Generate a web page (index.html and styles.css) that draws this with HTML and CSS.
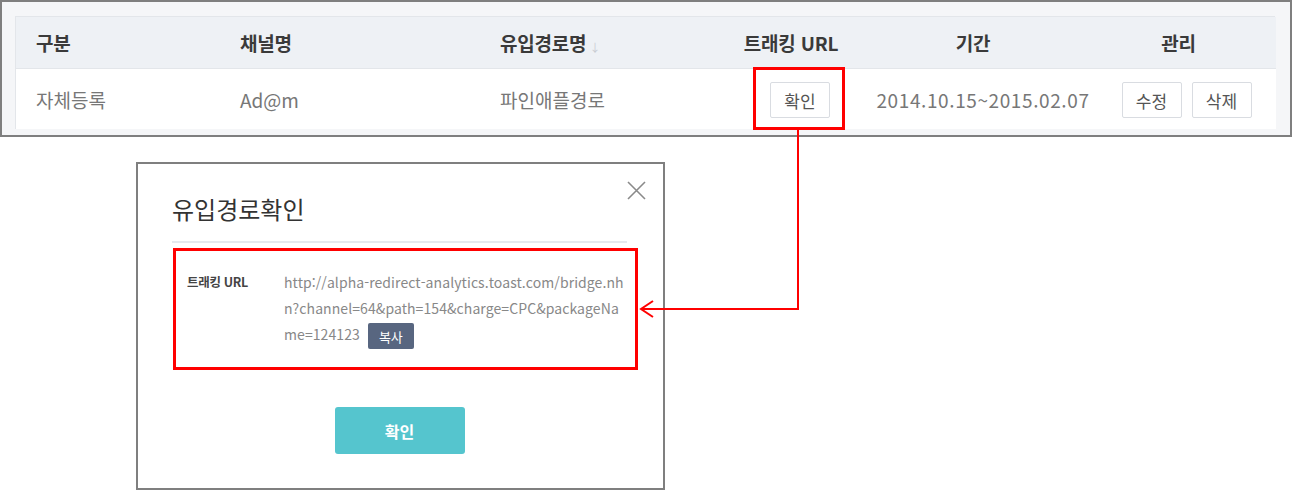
FILE: index.html
```html
<!DOCTYPE html>
<html lang="ko">
<head>
<meta charset="utf-8">
<link rel="stylesheet" href="styles.css">
</head>
<body>
<div class="page">
  <div class="frame">
    <div class="grid">
      <div class="th c1">구분</div>
      <div class="th c2">채널명</div>
      <div class="th c3">유입경로명<span class="sort">↓</span></div>
      <div class="th c4">트래킹 URL</div>
      <div class="th c5">기간</div>
      <div class="th c6">관리</div>

      <div class="td c1">자체등록</div>
      <div class="td c2">Ad@m</div>
      <div class="td c3">파인애플경로</div>
      <div class="td c4"><button class="btn">확인</button></div>
      <div class="td c5 date">2014.10.15~2015.02.07</div>
      <div class="td c6"><button class="btn">수정</button><button class="btn">삭제</button></div>
    </div>
  </div>

  <div class="modal">
    <button class="close" aria-label="닫기">
      <svg width="19" height="19" viewBox="0 0 19 19"><path d="M1 1L18 18M18 1L1 18" stroke="#8a8a8a" stroke-width="1.6" fill="none"/></svg>
    </button>
    <h2 class="title">유입경로확인</h2>
    <div class="section">
      <div class="label">트래킹 URL</div>
      <div class="url">
        <span class="line">http://alpha-redirect-analytics.toast.com/bridge.nh</span>
        <span class="line">n?channel=64&amp;path=154&amp;charge=CPC&amp;packageNa</span>
        <span class="line">me=124123 <button class="copy">복사</button></span>
      </div>
    </div>
    <div class="actions"><button class="ok">확인</button></div>
  </div>

  <div class="mark mark-btn"></div>
  <div class="mark mark-url"></div>
  <svg class="connector" width="1292" height="490" viewBox="0 0 1292 490">
    <path d="M798 129V309H641" stroke="#ff0000" stroke-width="2" fill="none"/>
    <path d="M653 301L641 309L653 317" stroke="#ff0000" stroke-width="2" fill="none"/>
  </svg>
</div>
</body>
</html>
```

FILE: styles.css
```css
* { box-sizing: border-box; }
html, body { margin: 0; padding: 0; background: #fff; }
body {
  font-family: "Noto Sans CJK KR", "Noto Sans", sans-serif;
  color: #333;
}
.page { position: relative; width: 1292px; height: 490px; overflow: hidden; }

.frame {
  height: 137px;
  border: 2px solid #7f7f7f;
  background: #f5f6f8;
  padding: 14px 0 0 13px;
}
.grid {
  display: grid;
  grid-template-columns: 204px 260px 251px 138px 228px 179px;
  grid-template-rows: 52px 60px;
  width: 1260px;
  border: 1px solid #e3e6ea;
  border-bottom: 0;
}
.th, .td { display: flex; align-items: center; }
.th {
  background: #eef1f5;
  border-bottom: 1px solid #e3e6ea;
  font-size: 19px;
  font-weight: 700;
  color: #3a3a3a;
  letter-spacing: -0.2px;
}
.td {
  background: #fff;
  font-size: 19px;
  color: #777;
}
.date { letter-spacing: 0.6px; }
.c1, .c2, .c3 { padding-left: 20px; }
.c4, .c5, .c6 { justify-content: center; }
.th.c4 { padding-right: 18px; }
.th.c5 { padding-right: 20px; }
.th.c6 { padding-right: 16px; }
.sort { font-size: 11px; color: #c8ccd2; margin-left: 3px; margin-top: 8px; font-weight: 400; }

.btn {
  font-family: inherit;
  font-size: 17px;
  color: #555;
  background: #fff;
  border: 1px solid #d9dce1;
  border-radius: 2px;
  height: 36px;
  width: 60px;
  padding: 0;
  margin-top: 2px;
}
.c6 .btn + .btn { margin-left: 10px; }

.modal {
  position: relative;
  width: 529px;
  height: 328px;
  margin: 25px 0 0 136px;
  border: 2px solid #7f7f7f;
  background: #fff;
  padding: 0 36px 0 34px;
}
.close {
  position: absolute;
  top: 17px;
  right: 17px;
  width: 19px;
  height: 19px;
  padding: 0;
  border: 0;
  background: none;
  line-height: 0;
}
.title {
  margin: 0;
  padding: 30px 0 17px;
  font-size: 24px;
  line-height: 30px;
  font-weight: 400;
  color: #333;
  border-bottom: 2px solid #e6e9ee;
}
.section {
  display: flex;
  padding: 26px 0 0 15px;
}
.label {
  width: 97px;
  font-size: 12.5px;
  font-weight: 700;
  line-height: 26px;
  color: #444;
  letter-spacing: -0.3px;
}
.url {
  font-size: 14px;
  line-height: 26px;
  color: #888;
  letter-spacing: 0.08px;
}
.line { display: block; white-space: nowrap; }
.copy {
  font-family: inherit;
  font-size: 13px;
  color: #fff;
  background: #586680;
  border: 0;
  border-radius: 2px;
  height: 26px;
  width: 46px;
  padding: 0;
  margin-left: 4px;
  vertical-align: middle;
}
.actions {
  display: flex;
  justify-content: center;
  padding-top: 58px;
}
.ok {
  font-family: inherit;
  width: 130px;
  height: 47px;
  border: 0;
  border-radius: 3px;
  background: #55c5ce;
  color: #fff;
  font-size: 16px;
  font-weight: 700;
}

.mark {
  position: absolute;
  border: 3px solid #ff0000;
}
.mark-btn { left: 753px; top: 67px; width: 92px; height: 63px; }
.mark-url { left: 173px; top: 248px; width: 465px; height: 122px; }
.connector { position: absolute; left: 0; top: 0; pointer-events: none; }
```
